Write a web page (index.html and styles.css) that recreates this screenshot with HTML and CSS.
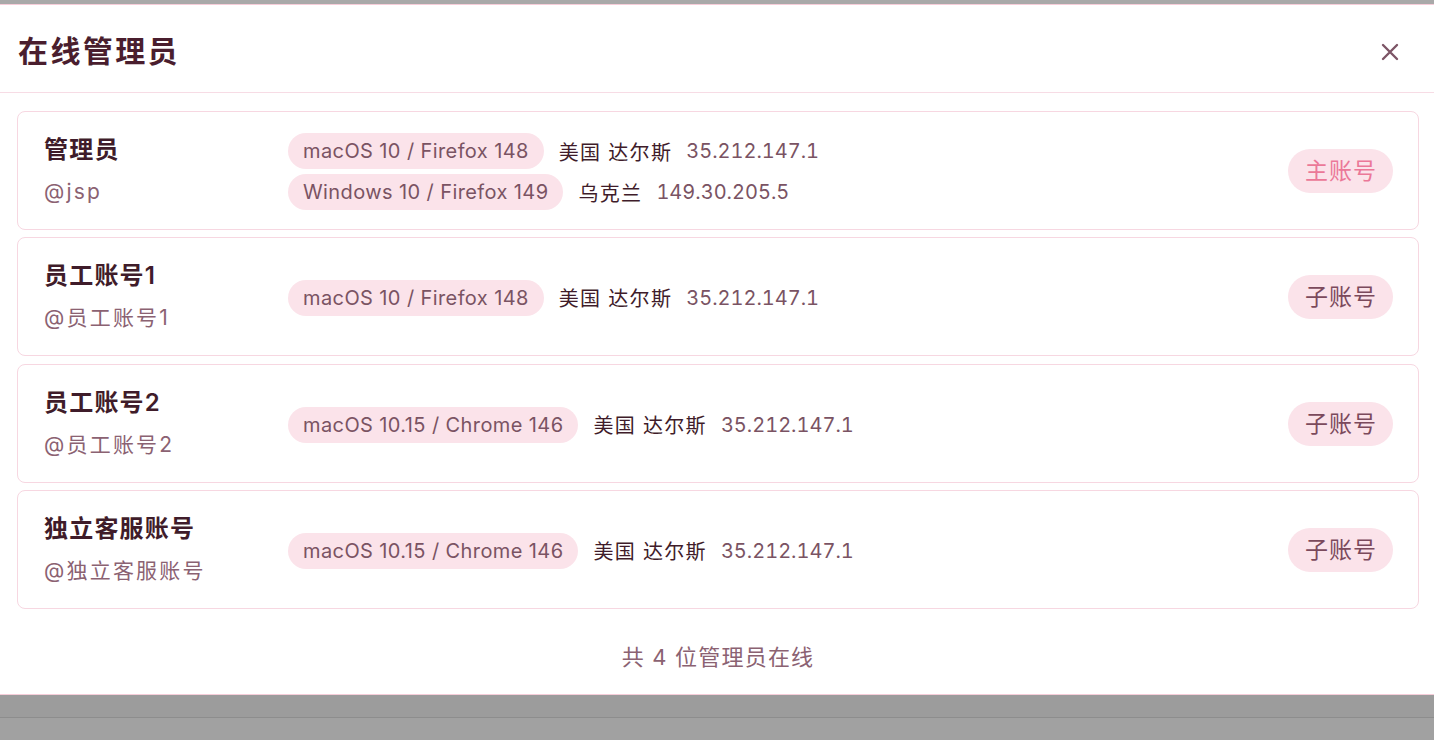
FILE: index.html
```html
<!DOCTYPE html>
<html>
<head>
    <meta charset="utf-8">
    <meta name="viewport" content="width=device-width, initial-scale=1.0">
    <title>在线管理员</title>
    <link rel="stylesheet" href="styles.css">
</head>
<body>
    <div class="topbar"></div>
    <section class="modal">
        <header class="modal-head">
            <h2>在线管理员</h2>
            <button type="button" class="close-btn" aria-label="关闭">
                <svg width="18" height="18" viewBox="0 0 18 18"><path d="M2 2L16 16M16 2L2 16" stroke="currentColor" stroke-width="2.4" stroke-linecap="round"/></svg>
            </button>
        </header>
        <div class="modal-body">
            <div class="admin-card">
                <div class="who">
                    <div class="name">管理员</div>
                    <div class="handle">@jsp</div>
                </div>
                <div class="sessions">
                    <div class="session">
                        <span class="pill">macOS 10 / Firefox 148</span>
                        <span class="place">美国 达尔斯</span>
                        <span class="ip">35.212.147.1</span>
                    </div>
                    <div class="session">
                        <span class="pill">Windows 10 / Firefox 149</span>
                        <span class="place">乌克兰</span>
                        <span class="ip">149.30.205.5</span>
                    </div>
                </div>
                <span class="role role-main">主账号</span>
            </div>
            <div class="admin-card">
                <div class="who">
                    <div class="name">员工账号1</div>
                    <div class="handle">@员工账号1</div>
                </div>
                <div class="sessions">
                    <div class="session">
                        <span class="pill">macOS 10 / Firefox 148</span>
                        <span class="place">美国 达尔斯</span>
                        <span class="ip">35.212.147.1</span>
                    </div>
                </div>
                <span class="role">子账号</span>
            </div>
            <div class="admin-card">
                <div class="who">
                    <div class="name">员工账号2</div>
                    <div class="handle">@员工账号2</div>
                </div>
                <div class="sessions">
                    <div class="session">
                        <span class="pill">macOS 10.15 / Chrome 146</span>
                        <span class="place">美国 达尔斯</span>
                        <span class="ip">35.212.147.1</span>
                    </div>
                </div>
                <span class="role">子账号</span>
            </div>
            <div class="admin-card">
                <div class="who">
                    <div class="name">独立客服账号</div>
                    <div class="handle">@独立客服账号</div>
                </div>
                <div class="sessions">
                    <div class="session">
                        <span class="pill">macOS 10.15 / Chrome 146</span>
                        <span class="place">美国 达尔斯</span>
                        <span class="ip">35.212.147.1</span>
                    </div>
                </div>
                <span class="role">子账号</span>
            </div>
            <p class="summary">共 4 位管理员在线</p>
        </div>
    </section>
    <div class="backdrop-line"></div>
</body>
</html>
```

FILE: styles.css
```css
html, body {
    margin: 0;
    padding: 0;
}
body {
    background: #a1a1a1;
    font-family: "Inter", "Noto Sans CJK SC", sans-serif;
    color: #3f1c2a;
}

.topbar {
    height: 4px;
    background: #a9a9a9;
}

.modal {
    background: #fff;
    border-top: 1px solid #f6cdd9;
    border-bottom: 1px solid #f6cdd9;
}

.modal-head {
    box-sizing: border-box;
    height: 88px;
    display: flex;
    align-items: center;
    justify-content: space-between;
    padding: 0 35px 0 18px;
    border-bottom: 1px solid #f7dce5;
}
.modal-head h2 {
    margin: 0;
    font-size: 30px;
    font-weight: 700;
    letter-spacing: 2.4px;
    color: #4a1e2e;
}
.close-btn {
    border: 0;
    background: none;
    padding: 0;
    margin-top: 6px;
    color: #7d5566;
    display: flex;
    cursor: pointer;
}

.modal-body {
    padding: 18px 15px 0 17px;
}

.admin-card {
    display: flex;
    align-items: center;
    height: 117px;
    padding: 0 25px 0 26px;
    border: 1px solid #f7d7e1;
    border-radius: 8px;
    margin-bottom: 7px;
}
.admin-card:nth-child(2) {
    margin-bottom: 8px;
}

.who {
    width: 244px;
    flex-shrink: 0;
}
.name {
    font-size: 24px;
    font-weight: 600;
    letter-spacing: 1.2px;
    line-height: 30px;
    color: #3f1c2a;
}
.handle {
    margin-top: 13px;
    font-size: 21px;
    letter-spacing: 2.2px;
    line-height: 28px;
    color: #8b6272;
}

.sessions {
    flex: 1;
    display: flex;
    flex-direction: column;
    gap: 5px;
    padding-top: 2px;
}
.session {
    display: flex;
    align-items: center;
}
.pill {
    height: 36px;
    line-height: 36px;
    padding: 0 15px;
    border-radius: 18px;
    background: #fbe3ea;
    color: #7a5363;
    font-size: 20px;
    letter-spacing: 0.4px;
}
.place {
    margin-left: 15px;
    font-size: 20px;
    letter-spacing: 1.3px;
    color: #3f1c2a;
}
.ip {
    margin-left: 14px;
    font-size: 20px;
    font-variant-numeric: tabular-nums;
    letter-spacing: 0;
    color: #7a5363;
}

.role {
    height: 44px;
    line-height: 44px;
    padding: 0 16px 0 17px;
    border-radius: 22px;
    background: #fbe3ea;
    color: #7b4a5c;
    font-size: 23px;
    letter-spacing: 1px;
}
.role-main {
    color: #eb7898;
}

.summary {
    margin: 0;
    padding: 26px 0 22px;
    text-align: center;
    font-size: 22px;
    letter-spacing: 1.2px;
    line-height: 30px;
    color: #8b6272;
}

.backdrop-line {
    height: 22px;
    border-bottom: 1px solid #8d8d8d;
    background: #9c9c9c;
}
```
